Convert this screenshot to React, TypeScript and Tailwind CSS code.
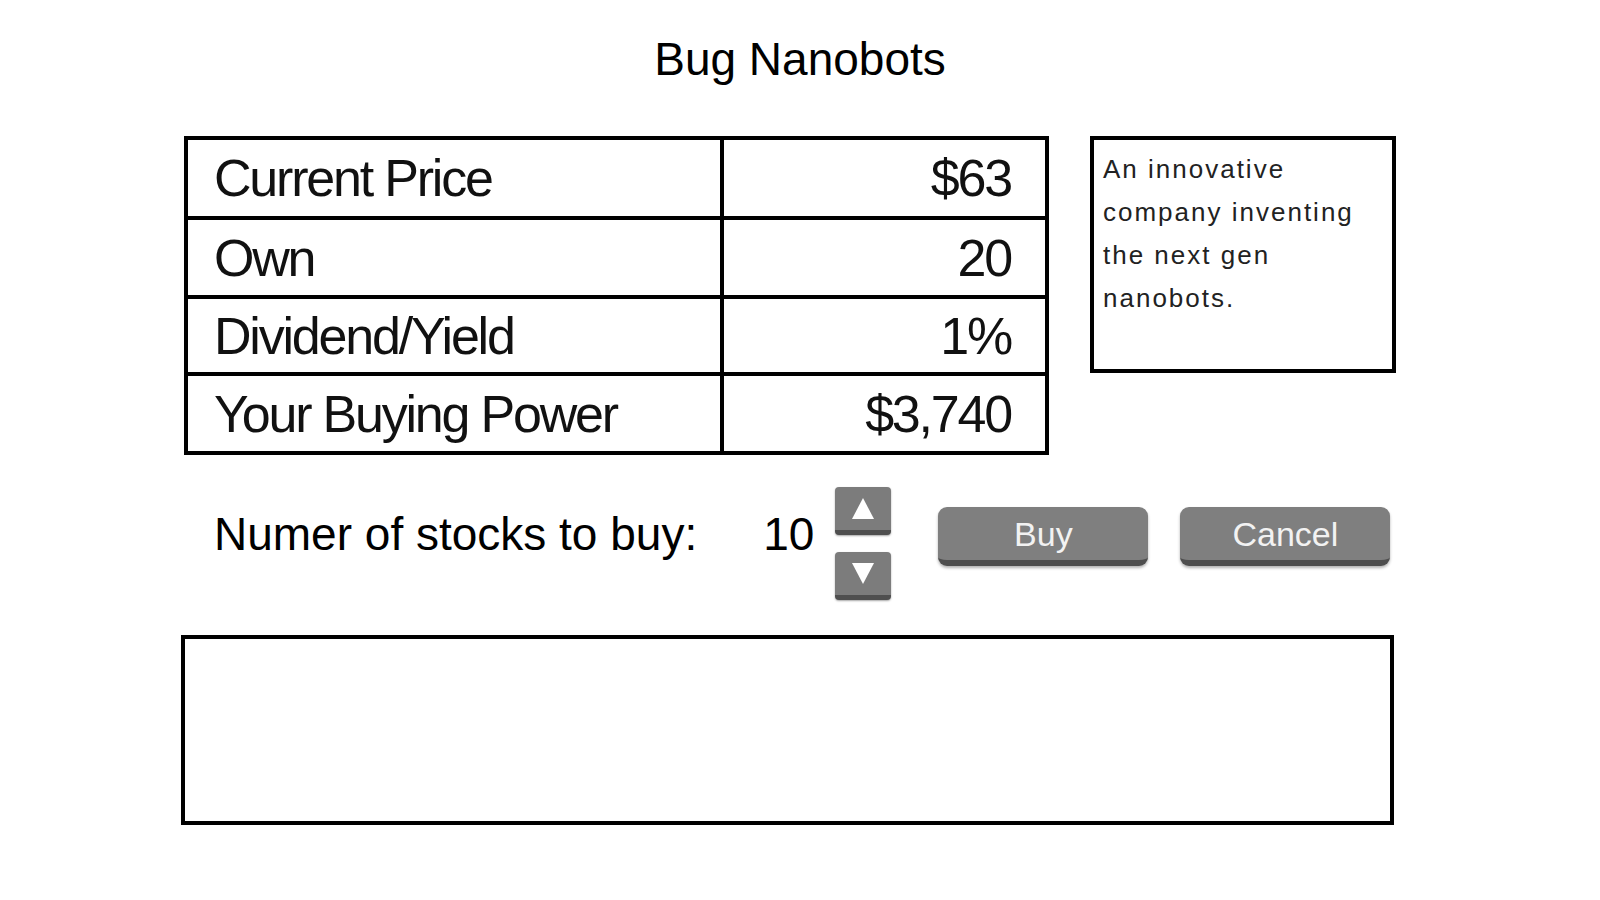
import React from 'react';

const rows = [
  { label: 'Current Price', value: '$63', h: 'h-[80px]' },
  { label: 'Own', value: '20', h: 'h-[79px]' },
  { label: 'Dividend/Yield', value: '1%', h: 'h-[77px]' },
  { label: 'Your Buying Power', value: '$3,740', h: 'h-[75px]' },
];

const SpinButton: React.FC<{ dir: 'up' | 'down' }> = ({ dir }) => (
  <button className="w-[56px] h-[48px] rounded-[4px] bg-[#7c7c7c] border-b-[5px] border-[#4f4f4f] shadow-[0_1px_2px_rgba(0,0,0,0.35)] flex items-center justify-center">
    <svg width="24" height="23" viewBox="0 0 24 23">
      {dir === 'up' ? (
        <polygon points="12,1 23,22 1,22" fill="#ffffff" />
      ) : (
        <polygon points="1,1 23,1 12,22" fill="#ffffff" />
      )}
    </svg>
  </button>
);

const ActionButton: React.FC<{ label: string }> = ({ label }) => (
  <button className="w-[210px] h-[59px] rounded-[9px] bg-[#7f7f7f] border-b-[6px] border-[#4e4e4e] shadow-[0_2px_3px_rgba(0,0,0,0.3)] text-[34px] leading-none text-[#f2f2f2] flex items-center justify-center">
    {label}
  </button>
);

const App: React.FC = () => {
  return (
    <div className="w-full h-[900px] bg-white text-black font-['Liberation_Sans',Arial,sans-serif] overflow-hidden">
      <h1 className="pt-[36px] text-center text-[46px] leading-none font-normal">Bug Nanobots</h1>

      <div className="ml-[181px] w-[1215px] flex flex-col">
        <div className="mt-[54px] flex items-start">
          <div className="ml-[3px] w-[865px] border-4 border-black flex flex-col">
            {rows.map((row, i) => (
              <div
                key={row.label}
                className={`flex ${row.h} ${i < rows.length - 1 ? 'border-b-4 border-black' : ''}`}
              >
                <div className="w-[536px] border-r-4 border-black flex items-center pl-[26px] text-[52px] leading-none tracking-[-2.2px] text-[#111]">
                  {row.label}
                </div>
                <div className="flex-1 flex items-center justify-end pr-[34px] text-[52px] leading-none tracking-[-2.2px] text-[#111]">
                  {row.value}
                </div>
              </div>
            ))}
          </div>

          <div className="ml-[41px] w-[306px] h-[237px] border-4 border-black pl-[9px] pt-[8px] text-[26px] leading-[43px] tracking-[2px] text-[#222222]">
            An innovative company inventing the next gen nanobots.
          </div>
        </div>

        <div className="mt-[32px] flex items-start">
          <span className="mt-[24px] ml-[33px] text-[46px] leading-none">Numer of stocks to buy:</span>
          <span className="mt-[24px] ml-[66px] text-[46px] leading-none">10</span>
          <div className="ml-[21px] flex flex-col gap-[17px]">
            <SpinButton dir="up" />
            <SpinButton dir="down" />
          </div>
          <div className="mt-[20px] ml-[47px]">
            <ActionButton label="Buy" />
          </div>
          <div className="mt-[20px] ml-[32px]">
            <ActionButton label="Cancel" />
          </div>
        </div>

        <div className="mt-[35px] w-[1213px] h-[190px] border-4 border-black" />
      </div>
    </div>
  );
};

export default App;
